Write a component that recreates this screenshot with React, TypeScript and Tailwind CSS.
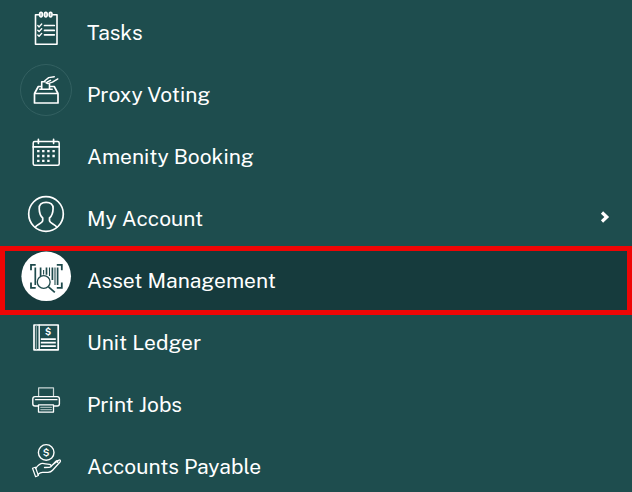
import React from 'react';

type MenuItem = {
  label: string;
  icon: React.ReactNode;
  expandable?: boolean;
  active?: boolean;
};

const TasksIcon = () => (
  <>
    <path d="M19 12.8H15.5V42.2H37V12.8H33" strokeWidth="1.6" />
    <g fill="#9eb5b5" strokeWidth="1.5">
      <ellipse cx="21" cy="12.6" rx="1.5" ry="2.4" />
      <ellipse cx="25.8" cy="12.6" rx="1.5" ry="2.4" />
      <ellipse cx="30.6" cy="12.6" rx="1.5" ry="2.4" />
    </g>
    <path d="M17.8 23.5l1.3 1.4 2.6-2.9M17.8 28.2l1.3 1.4 2.6-2.9M17.8 32.9l1.3 1.4 2.6-2.9" strokeWidth="1.4" />
    <path d="M24.5 23.5H34.3M24.5 28.4H34.3M24.5 32.8H34.3" strokeWidth="1.7" />
  </>
);

const VotingIcon = () => (
  <>
    <circle cx="26" cy="26" r="25.5" strokeWidth="1" stroke="#336061" />
    <path d="M14.5 29.5H38V39H14.5ZM14.5 29.5L18.3 22.5H21.3M30 22.5H34.2L38 29.5" strokeWidth="1.7" />
    <path d="M19.8 25.2H32.2M21.7 25.2V17.7H25M29.5 25.2V20" strokeWidth="1.6" />
    <path d="M24.5 17L28.7 13.6 34.3 12.7M26 18.8L28 19.6 32.5 18.2 37.8 14.9M27 18.2L30.5 16.3" strokeWidth="1.4" />
  </>
);

const CalendarIcon = () => (
  <>
    <rect x="13.2" y="15.6" width="26" height="23.6" rx="1.5" strokeWidth="1.5" />
    <path d="M13.2 20.9H39.2M18.4 13.4V17.3M33.6 13.4V17.3" strokeWidth="1.7" />
    <path
      d="M17.1 25.2h2.4M22.1 25.2h2.4M27.2 25.2h2.4M32.4 25.2h2.4M17.1 30h2.4M22.1 30h2.4M27.2 30h2.4M32.4 30h2.4M17.1 34.8h2.4M22.1 34.8h2.4M27.2 34.8h2.4"
      strokeWidth="2.3"
      strokeLinecap="butt"
    />
  </>
);

const AccountIcon = () => (
  <>
    <circle cx="26" cy="26" r="17.3" strokeWidth="1.7" />
    <path
      d="M15.3 39.2C16.5 36 22.7 35.5 22.7 32.5V30C20.4 28 19.3 25 19.2 20.5C19 16.5 21.7 14.3 26.1 14.3C30.5 14.3 33.3 16.5 33.1 20.5C33 25 31.8 28 29.5 30V32.5C29.5 35.5 35.6 36 36.8 39.2"
      strokeWidth="1.7"
    />
  </>
);

const AssetIcon = () => (
  <>
    <circle cx="26.2" cy="26.3" r="24.8" fill="#fff" stroke="none" />
    <g stroke="#1e4a4c" strokeLinecap="butt">
      <path d="M15.7 14.9H11V20.2M36.8 14.9H41.8V20.2M11 32.5V37.9H15.7M36.8 37.9H41.8V32.5" strokeWidth="1.8" strokeLinejoin="miter" />
      <path d="M15.3 17.5V35M20.6 17.5V26M26.5 17.5V24.7M32.4 17.5V30M37.6 17.5V35" strokeWidth="1.7" />
      <path d="M23.6 20V24.5M29.5 17.5V26M35 17.5V35" strokeWidth="1.1" />
      <circle cx="23.7" cy="32" r="6.4" fill="#fff" strokeWidth="1.3" />
      <path d="M28.5 36.8L34.8 42.3" strokeWidth="1.7" />
    </g>
  </>
);

const LedgerIcon = () => (
  <>
    <rect x="14" y="13" width="24.2" height="24.8" strokeWidth="1.7" />
    <path d="M16.3 13V37.5" strokeWidth="1" stroke="#9eb5b5" />
    <path d="M19.2 13V37.5" strokeWidth="1.4" />
    <text x="28" y="23" fill="#fff" stroke="none" fontSize="9" fontWeight="700" textAnchor="middle">$</text>
    <path d="M20.8 27.2H35.8M20.8 30.6H35.8M20.8 34.1H35.8" strokeWidth="1.7" strokeLinecap="butt" />
  </>
);

const PrinterIcon = () => (
  <>
    <path d="M18.6 22V13.8H33.5V22" stroke="#c9d6d6" />
    <path d="M18 32H15Q12.8 32 12.8 29.8V24.8Q12.8 22.6 15 22.6H37.2Q39.4 22.6 39.4 24.8V29.8Q39.4 32 37.2 32H34" strokeWidth="1.4" />
    <path d="M15.5 25.7H37" strokeWidth="1.3" />
    <rect x="18.5" y="30.8" width="15" height="7.3" strokeWidth="1.3" />
    <path d="M20.8 33.4H31.4M20.8 35.6H31.4" stroke="#9eb5b5" />
  </>
);

const PayableIcon = () => (
  <>
    <circle cx="26.2" cy="16.4" r="7.8" strokeWidth="1.4" />
    <text x="26.2" y="20.2" fill="#fff" stroke="none" fontSize="10" fontWeight="600" textAnchor="middle">$</text>
    <path d="M12.5 32.3L15.4 31.2L18.4 39.5L15.6 40.7Z" />
    <path
      d="M15.7 32.3C18.5 28.5 21 26.8 24 27.6C26.5 28.3 29 28 30.3 28.6C31.8 29.5 31 31.2 29.2 31.3L24.5 31.5M30.8 30.8L35.7 25.5C37.2 24.1 38.3 25 37.5 26.3M33.4 28.2L38.5 24.3C40.3 23.4 41 24.7 40 26L32.6 34.3C31.3 35.8 30 36.3 28 36.3H22.5C20.7 36.3 19.5 37 18.2 38.2"
      strokeWidth="1.3"
    />
  </>
);

const menuItems: MenuItem[] = [
  { label: 'Tasks', icon: <TasksIcon /> },
  { label: 'Proxy Voting', icon: <VotingIcon /> },
  { label: 'Amenity Booking', icon: <CalendarIcon /> },
  { label: 'My Account', icon: <AccountIcon />, expandable: true },
  { label: 'Asset Management', icon: <AssetIcon />, active: true },
  { label: 'Unit Ledger', icon: <LedgerIcon /> },
  { label: 'Print Jobs', icon: <PrinterIcon /> },
  { label: 'Accounts Payable', icon: <PayableIcon /> }
];

const rowClass = 'flex w-full h-[62px] items-center gap-[15px] pl-5 pr-[22px] text-left';

const RowContent: React.FC<{ item: MenuItem }> = ({ item }) => (
  <>
    <svg
      viewBox="0 0 52 52"
      className="w-13 h-13 shrink-0 self-start"
      fill="none"
      stroke="#fff"
      strokeWidth="1.2"
      strokeLinecap="round"
      strokeLinejoin="round"
      aria-hidden="true"
    >
      {item.icon}
    </svg>
    <span className="flex-1">{item.label}</span>
    {item.expandable && (
      <svg viewBox="0 0 10 12" className="w-[10px] h-3 mb-1 shrink-0" fill="none" stroke="#fff" strokeWidth="3.2" aria-hidden="true">
        <path d="M2 1.5L6.8 6L2 10.5" />
      </svg>
    )}
  </>
);

export default function App() {
  return (
    <nav className="min-h-screen bg-[#1e4d4e] pt-0.5 font-['Public_Sans','Inter',sans-serif] text-[21px] leading-7 text-white">
      <ul>
        {menuItems.map((item) => (
          <li key={item.label} className={item.active ? 'relative bg-[#163b3d]' : ''}>
            {item.expandable ? (
              <button type="button" aria-expanded="false" className={rowClass}>
                <RowContent item={item} />
              </button>
            ) : (
              <a href="#" aria-current={item.active ? 'page' : undefined} className={rowClass}>
                <RowContent item={item} />
              </a>
            )}
            {/* Highlight frame */}
            {item.active && (
              <div className="pointer-events-none absolute inset-x-0 -top-1 -bottom-[3px] border-[5px] border-[#ee0505]" />
            )}
          </li>
        ))}
      </ul>
    </nav>
  );
}
